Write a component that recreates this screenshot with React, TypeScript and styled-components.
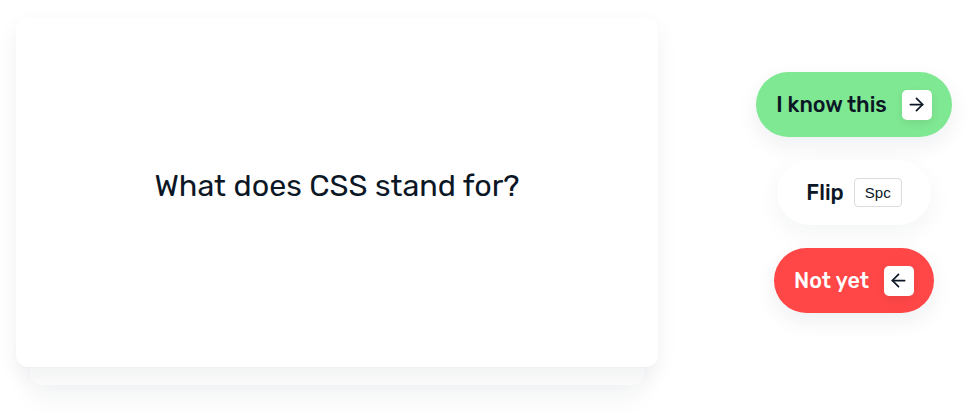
import React from "react";
import styled, { createGlobalStyle } from "styled-components";
import { ArrowRight, ArrowLeft } from "lucide-react";

const Global = createGlobalStyle`
  html, body { margin: 0; padding: 0; background: #ffffff; }
  body { font-family: "Rubik", "Inter", "Noto Sans", sans-serif; color: #0c1726; }
`;

const Page = styled.div`
  width: 974px;
  height: 413px;
  display: flex;
  align-items: center;
  padding: 0 0 0 16px;
  box-sizing: border-box;
  gap: 86px;
`;

const CardStack = styled.div`
  position: relative;
  width: 642px;
  height: 349px;
  margin-top: -28px;
  &::before {
    content: "";
    position: absolute;
    left: 14px;
    right: 14px;
    bottom: -18px;
    height: 60px;
    border-radius: 12px;
    background: #fdfdfd;
    box-shadow: 0 12px 26px rgba(20, 30, 50, 0.055);
    z-index: 0;
  }
`;

const Card = styled.div`
  position: relative;
  z-index: 1;
  height: 100%;
  border-radius: 12px;
  background: #ffffff;
  box-shadow: 0 8px 22px rgba(20, 30, 50, 0.06), 0 1px 3px rgba(20, 30, 50, 0.02);
  display: flex;
  align-items: center;
  justify-content: center;
`;

const Question = styled.div`
  font-size: 30.5px;
  font-weight: 400;
  color: #0c1726;
  margin-top: -14px;
`;

const Actions = styled.div`
  width: 220px;
  display: flex;
  flex-direction: column;
  align-items: center;
  gap: 23px;
  margin-top: -28px;
`;

const Pill = styled.button<{ $tone: "green" | "white" | "red" }>`
  height: 65px;
  border: none;
  border-radius: 33px;
  display: flex;
  align-items: center;
  font-family: inherit;
  font-size: 21.5px;
  font-weight: 500;
  cursor: pointer;
  box-sizing: border-box;
  padding: ${(p) => (p.$tone === "white" ? "0 29px" : "0 20px")};
  gap: ${(p) => (p.$tone === "white" ? "10px" : "15px")};
  background: ${(p) =>
    p.$tone === "green" ? "#7fe892" : p.$tone === "red" ? "#ff4747" : "#ffffff"};
  color: ${(p) => (p.$tone === "red" ? "#ffffff" : "#0c1726")};
  box-shadow: ${(p) =>
    p.$tone === "white"
      ? "0 8px 24px rgba(20, 30, 50, 0.05)"
      : "0 8px 22px rgba(20, 30, 50, 0.07)"};
`;

const ArrowKey = styled.span`
  width: 30px;
  height: 30px;
  border-radius: 5px;
  background: #ffffff;
  display: flex;
  align-items: center;
  justify-content: center;
  color: #0c1726;
  box-shadow: 0 3px 8px rgba(0, 0, 0, 0.08);
`;

const TextKey = styled.span`
  height: 29px;
  padding: 0 10px;
  border: 1px solid #dcdcdc;
  border-radius: 4px;
  background: #ffffff;
  display: flex;
  align-items: center;
  font-family: "Liberation Sans", Arial, sans-serif;
  font-size: 15px;
  font-weight: 400;
  color: #0c1726;
  box-sizing: border-box;
`;

export default function App() {
  return (
    <>
      <Global />
      <Page>
        <CardStack>
          <Card>
            <Question>What does CSS stand for?</Question>
          </Card>
        </CardStack>
        <Actions>
          <Pill $tone="green">
            I know this
            <ArrowKey>
              <ArrowRight size={21} strokeWidth={2} />
            </ArrowKey>
          </Pill>
          <Pill $tone="white">
            Flip
            <TextKey>Spc</TextKey>
          </Pill>
          <Pill $tone="red">
            Not yet
            <ArrowKey>
              <ArrowLeft size={21} strokeWidth={2} />
            </ArrowKey>
          </Pill>
        </Actions>
      </Page>
    </>
  );
}
